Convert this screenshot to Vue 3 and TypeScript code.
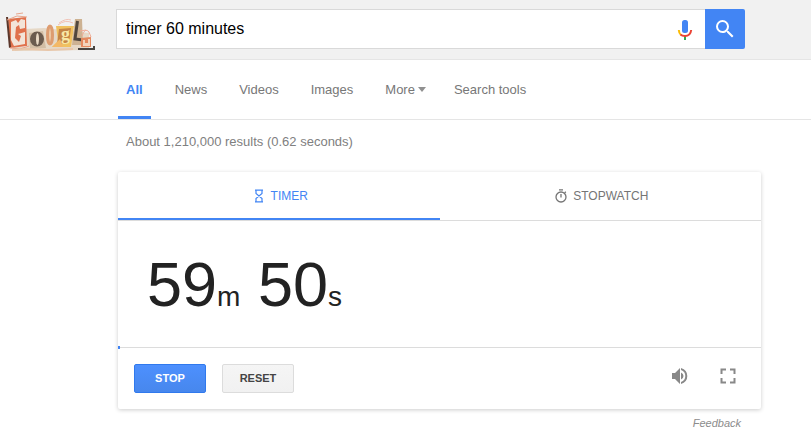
<script setup lang="ts">
import { computed, ref } from 'vue'

const query = ref('timer 60 minutes')
const total = 3600
const remaining = ref(3590)
const activeTab = ref('All')
const tabs = ['All', 'News', 'Videos', 'Images']

const minutes = computed(() => Math.floor(remaining.value / 60))
const seconds = computed(() => String(remaining.value % 60).padStart(2, '0'))
const progress = computed(() => ((total - remaining.value) / total) * 100 + '%')
</script>

<template>
  <div class="page">
    <header class="top">
      <a class="logo" href="#" aria-label="Google">
        <svg width="92" height="40" viewBox="0 -4 92 40">
          <path d="M20 16 39 15 48 16 84 20V37L10 38 8 34H22Z" fill="#e6d8c6" />
          <path d="M3 6 21 4 22 33 5 35Z" fill="#e0714c" />
          <path d="M1 4 3 4 6 34 4 35Z" fill="#5b372b" />
          <path d="M2 7 12 3 22 4M5 35 15 36 24 33M11 1 18 0" fill="none" stroke="#e9a68c" />
          <path d="M6 9 11 7 13 10 16 6 20 7V15L15 16 14 12 11 14 10 25 14 29 16 23 13 21 20 19 20 31 9 33 6 27Z" fill="#f3e4d8" />
          <path d="M24 20 38 18 41 35 25 36Z" fill="#d2bda4" />
          <ellipse cx="32" cy="26" rx="7" ry="7.500" fill="#6b5b4e" />
          <ellipse cx="32.500" cy="26" rx="1.500" ry="6" fill="#e9d9c5" />
          <ellipse cx="45" cy="22" rx="2.500" ry="9" fill="#ecc9a6" stroke="#dd9c70" stroke-width="3" />
          <path d="M51 13 69 13 66 34 47 34 53 28Z" fill="#f0c160" />
          <path d="M54 16 66 15 64 30 52 31Z" fill="#c58445" />
          <path d="M47 34 55 26 58 34Z" fill="#f3b866" />
          <path d="M53 12Q60 6 68 10M54 10Q61 5 66 7" fill="none" stroke="#f0c2b5" />
          <text class="serif" x="56" y="27" font-size="18" fill="#f8e8a5">g</text>
          <path d="M70 6 77 6 78 32 67 32Z" fill="#cdb292" />
          <path d="M72.500 8 70 26 78 27" fill="none" stroke="#51473e" stroke-width="3" />
          <path d="M76 25 86 24 86 34 76 34Z" fill="#e48a60" />
          <path d="M78 27H80V30H83V26H85V33H78Z" fill="#f2d4bd" />
          <path d="M77 23Q80 14 84 19L86 24M75 18 81 17" fill="none" stroke="#f0ab95" />
          <path d="M73 36H89V33" fill="none" stroke="#494541" stroke-width="2" />
          <path d="M7 37 22 36 43 37 68 36" fill="none" stroke="#e8c7ab" stroke-width="2" />
        </svg>
      </a>
      <form class="search" role="search" @submit.prevent>
        <div class="field">
          <input v-model="query" type="text" aria-label="Search" />
          <button class="mic" type="button" aria-label="Search by voice">
            <svg width="24" height="24" viewBox="0 0 24 24">
              <rect x="9" y="3" width="6" height="13" rx="2.500" fill="#4285f4" />
              <path d="M11 19h2v4h-2z" fill="#34a853" />
              <path d="M5.800 13Q6 16.500 8 18" fill="none" stroke="#fbbc05" stroke-width="2" />
              <path d="M7.500 17.500Q9 19 12 19Q17.500 19 18.200 13" fill="none" stroke="#ea4335" stroke-width="2" />
            </svg>
          </button>
        </div>
        <button class="go" type="submit" aria-label="Search">
          <svg width="24" height="24" viewBox="0 0 24 24" fill="#fff">
            <path d="M15.500 14h-.79l-.28-.27A6.471 6.471 0 0 0 16 9.500 6.500 6.500 0 1 0 9.500 16c1.610 0 3.090-.59 4.230-1.570l.27.28v.79l5 4.990L20.490 19l-4.990-5zm-6 0C7.010 14 5 11.990 5 9.500S7.010 5 9.500 5 14 7.010 14 9.500 11.990 14 9.500 14z" />
          </svg>
        </button>
      </form>
    </header>

    <nav class="nav">
      <a v-for="tab in tabs" :key="tab" href="#" :class="{ active: tab === activeTab }" @click.prevent="activeTab = tab">{{ tab }}</a>
      <button type="button" class="more">More<span class="caret"></span></button>
      <button type="button">Search tools</button>
    </nav>

    <main>
      <p class="stats">About 1,210,000 results (0.62 seconds)</p>

      <section class="card">
        <div class="modes" role="tablist">
          <button type="button" role="tab" aria-selected="true" class="selected">
            <svg width="12" height="14" viewBox="0 0 12 14" fill="none" stroke="currentColor" stroke-width="1.200">
              <path d="M2 1.200h8M2 12.800h8M3 1.200V4.500L9 9.500v3.300M9 1.200V4.500L3 9.500v3.300" />
            </svg>
            TIMER
          </button>
          <button type="button" role="tab" aria-selected="false">
            <svg width="12" height="14" viewBox="0 0 12 14" fill="none" stroke="currentColor" stroke-width="1.300">
              <circle cx="6" cy="8" r="5" />
              <path d="M4 .8h4M6 5v3.500M9.600 4l1.200-1.200" />
            </svg>
            STOPWATCH
          </button>
        </div>

        <div class="time" role="timer">{{ minutes }}<small>m</small> {{ seconds }}<small>s</small></div>

        <div class="track"><div class="bar" :style="{ width: progress }"></div></div>

        <div class="controls">
          <button type="button" class="btn primary">STOP</button>
          <button type="button" class="btn">RESET</button>
          <button type="button" class="icon sound" aria-label="Sound">
            <svg width="20" height="20" viewBox="0 0 20 20" fill="currentColor">
              <path d="M2 7v6h3l5 5V2L5 7z" />
              <path d="M11 6.500q2.500 1 2.500 3.500t-2.500 3.500z" />
              <path d="M11 2v1.900Q15.300 5.500 15.300 10T11 16.100V18Q17.300 16 17.300 10T11 2z" />
            </svg>
          </button>
          <button type="button" class="icon" aria-label="Full screen">
            <svg width="20" height="20" viewBox="0 0 20 20" fill="none" stroke="currentColor" stroke-width="2">
              <path d="M3.500 8V3.500H8M12 3.500h4.500V8M16.500 12v4.500H12M8 16.500H3.500V12" />
            </svg>
          </button>
        </div>
      </section>
      <a class="feedback" href="#">Feedback</a>
    </main>
  </div>
</template>

<style>
body {
  margin: 0;
  background: #fff;
}
</style>

<style scoped>
.page {
  font-family: "Liberation Sans", Arial, sans-serif;
  font-size: 13px;
  color: #808080;
}
button {
  margin: 0;
  padding: 0;
  border: 0;
  background: none;
  font: inherit;
  color: inherit;
  cursor: pointer;
}
a {
  color: inherit;
  text-decoration: none;
}
svg {
  display: block;
  overflow: visible;
}
.top {
  display: flex;
  align-items: center;
  padding: 9px 66px 10px 5px;
  background: #f1f1f1;
  border-bottom: 1px solid #e5e5e5;
}
.logo {
  flex: 0 0 111px;
}
.serif {
  font-family: "Liberation Serif", serif;
  font-weight: bold;
}
.search {
  display: flex;
  flex: 1;
  max-width: 629px;
}
.field {
  display: flex;
  align-items: center;
  flex: 1;
  height: 40px;
  box-sizing: border-box;
  padding: 0 8px 0 9px;
  background: #fff;
  border: 1px solid #d9d9d9;
  border-right: 0;
}
.field input {
  flex: 1;
  min-width: 0;
  padding: 0;
  border: 0;
  outline: 0;
  background: none;
  font: 16px "Liberation Sans", Arial, sans-serif;
  color: #000;
}
.go {
  display: grid;
  place-items: center;
  width: 40px;
  height: 40px;
  background: #4285f4;
  border-radius: 0 2px 2px 0;
}
.nav {
  display: flex;
  gap: 16px;
  padding-left: 118px;
  border-bottom: 1px solid #e5e5e5;
}
.nav > * {
  height: 59px;
  box-sizing: border-box;
  padding: 3px 8px 0;
  line-height: 53px;
  border-bottom: 3px solid transparent;
  color: #777;
}
.nav .active {
  color: #4285f4;
  font-weight: bold;
  border-bottom-color: #4285f4;
}
.nav .more {
  display: flex;
  align-items: center;
  gap: 3px;
  padding-right: 4px;
}
.caret {
  border: 4px solid transparent;
  border-top: 5px solid #909090;
  border-bottom: 0;
}
main {
  display: flex;
  flex-direction: column;
  max-width: 643px;
  margin: 0 50px 0 118px;
}
.stats {
  margin: 14px 8px 22px;
  line-height: 16px;
}
.card {
  background: #fff;
  border-radius: 2px;
  box-shadow: 0 1px 4px rgba(0, 0, 0, 0.2);
}
.modes {
  display: grid;
  grid-template-columns: 1fr 1fr;
  border-bottom: 1px solid #dcdcdc;
}
.modes button {
  display: flex;
  align-items: center;
  justify-content: center;
  gap: 6px;
  height: 48px;
  box-sizing: border-box;
  border-bottom: 2px solid transparent;
  padding: 2px 0 0 3px;
  font-size: 12px;
  color: #757575;
}
.modes .selected {
  color: #4285f4;
  border-bottom-color: #4285f4;
}
.time {
  padding: 27px 29px 26px;
  font-size: 63px;
  line-height: 72px;
  color: #222;
}
.time small {
  font-size: 28px;
  line-height: 1;
}
.track {
  display: flex;
  align-items: center;
  height: 3px;
  background: linear-gradient(#dcdcdc, #dcdcdc) center / 100% 1px no-repeat;
}
.bar {
  height: 3px;
  background: #4285f4;
}
.controls {
  display: flex;
  align-items: center;
  padding: 15px 23px 16px 16px;
}
.btn {
  width: 72px;
  height: 29px;
  box-sizing: border-box;
  margin-right: 16px;
  padding-bottom: 1px;
  border: 1px solid #dcdcdc;
  border-radius: 2px;
  background: linear-gradient(#f5f5f5, #f1f1f1);
  font-size: 11px;
  font-weight: bold;
  color: #444;
}
.primary {
  border-color: #3079ed;
  background: linear-gradient(#4d90fe, #4787ed);
  color: #fff;
}
.icon {
  margin-bottom: 5px;
  color: #888;
}
.sound {
  margin-left: auto;
  margin-right: 28px;
}
.feedback {
  align-self: flex-end;
  margin: 7px 20px 0 0;
  font-size: 11px;
  font-style: italic;
  line-height: 14px;
  color: #8c8c8c;
}
</style>
